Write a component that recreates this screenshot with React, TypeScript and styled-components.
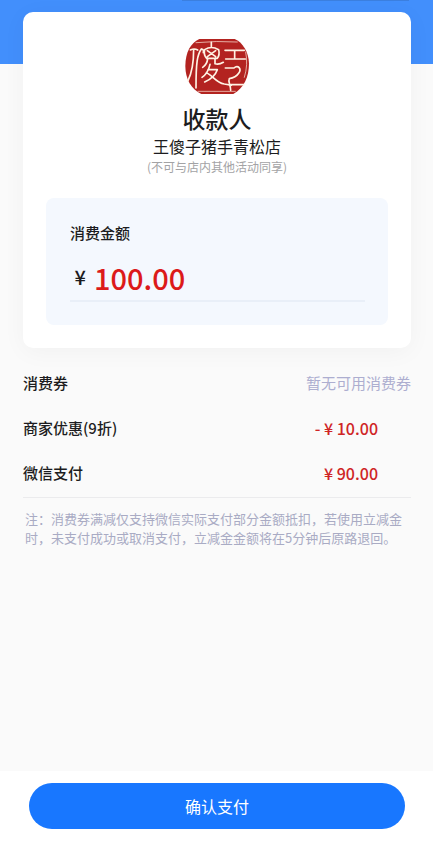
import React from "react";
import styled, { createGlobalStyle } from "styled-components";

const GlobalStyle = createGlobalStyle`
  * { box-sizing: border-box; }
  body {
    margin: 0;
    font-family: "Noto Sans CJK SC", "Noto Sans", sans-serif;
    color: #1c1c20;
    background: #fafafa;
  }
`;

const Page = styled.div`
  display: flex;
  flex-direction: column;
  min-height: 100vh;
  background: linear-gradient(#428ffc 64px, #fafafa 64px);
`;

const TopLine = styled.div`
  height: 1px;
  margin: 0 24px 0 42%;
  background: #3b7fdf;
`;

const Main = styled.main`
  flex: 1;
  padding: 11px 22px 24px 23px;
`;

const Card = styled.section`
  display: flex;
  flex-direction: column;
  align-items: center;
  padding: 26px 23px 23px;
  border-radius: 10px;
  background: #ffffff;
  box-shadow: 0 4px 24px rgba(0, 0, 0, 0.04);
`;

const Title = styled.h1`
  margin: 6px 0 0;
  font-size: 23px;
  line-height: 32px;
  font-weight: 500;
`;

const Shop = styled.p`
  margin: 0;
  font-size: 16px;
  line-height: 24px;
`;

const Hint = styled.p`
  margin: 0;
  font-size: 12px;
  line-height: 18px;
  color: #a3a3a5;
`;

const AmountBox = styled.div`
  align-self: stretch;
  margin-top: 22px;
  padding: 23px 23px 23px 24px;
  border-radius: 8px;
  background: #f4f8fe;
`;

const AmountLabel = styled.label`
  display: block;
  font-size: 15px;
  line-height: 24px;
  font-weight: 500;
`;

const AmountField = styled.div`
  display: flex;
  align-items: center;
  gap: 8px;
  margin-top: 11px;
  padding-bottom: 2px;
  border-bottom: 2px solid #e9eff8;
`;

const Currency = styled.span`
  width: 16px;
  font-size: 20px;
  line-height: 32px;
  font-weight: 500;
  text-align: right;
`;

const AmountInput = styled.input`
  flex: 1;
  min-width: 0;
  height: 42px;
  padding: 0;
  border: 0;
  outline: 0;
  background: transparent;
  font-family: inherit;
  font-size: 29px;
  font-weight: 500;
  color: #dc1a1a;
`;

const Details = styled.dl`
  margin: 12px 0 0;
  padding-bottom: 2px;
  border-bottom: 1px solid #ebebed;
`;

const Row = styled.div`
  display: flex;
  align-items: center;
  justify-content: space-between;
  height: 45px;
`;

const Name = styled.dt`
  font-size: 15px;
  font-weight: 500;
`;

const Value = styled.dd<{ $tone: "muted" | "price" }>`
  margin: 0;
  padding-right: ${(p) => (p.$tone === "price" ? "33px" : "0")};
  font-size: ${(p) => (p.$tone === "price" ? "16px" : "15px")};
  font-weight: ${(p) => (p.$tone === "price" ? 500 : 400)};
  color: ${(p) => (p.$tone === "price" ? "#cf2525" : "#adaed0")};
`;

const Note = styled.p`
  margin: 11px 0 0 2px;
  font-size: 13px;
  line-height: 19px;
  color: #a9abc4;
`;

const Footer = styled.footer`
  padding: 12px 28px 16px 29px;
  background: #ffffff;
`;

const PayButton = styled.button`
  display: block;
  width: 100%;
  height: 46px;
  border: 0;
  border-radius: 23px;
  background: #1877ff;
  color: #ffffff;
  font-family: inherit;
  font-size: 16px;
  cursor: pointer;
`;

const rows: { name: string; value: string; tone: "muted" | "price" }[] = [
  { name: "消费券", value: "暂无可用消费券", tone: "muted" },
  { name: "商家优惠(9折)", value: "- ¥ 10.00", tone: "price" },
  { name: "微信支付", value: "¥ 90.00", tone: "price" },
];

function SealLogo() {
  return (
    <svg width="65" height="58" viewBox="27 24 195 174" role="img" aria-label="王傻子">
      <path
        d="M70 27 H176 C200 37 218 66 219 100 C219 142 204 174 172 192 H76 C46 178 28 148 28 108 C28 68 44 38 70 27Z"
        fill="#b32320"
      />
      <g fill="none" stroke="#fff3e4" strokeLinecap="round" strokeLinejoin="round">
        <path d="M60 38 Q120 32 184 36 M66 184 H178 M209 66 Q217 104 205 142" strokeWidth="2" />
        <path d="M53 58 C53 96 48 128 36 152 M43 60 Q55 54 65 60 M76 57 C64 74 60 96 60 174 M76 57 Q84 57 82 68" strokeWidth="5" />
        <path d="M106 37 V52 M86 59 Q106 46 128 59 Q132 75 124 85 H92 Q82 74 86 59Z M94 62 L119 80 M119 62 L94 80 M95 86 C94 98 89 106 80 112 M117 86 V101 Q128 105 142 97" strokeWidth="5" />
        <path d="M102 103 C98 121 90 134 78 142 M96 119 H124 C118 136 104 148 86 156 M91 128 C108 134 119 157 145 162 Q160 164 166 166" strokeWidth="5" />
        <path d="M147 61 H205 M149 87 H208 M176 62 V86 M148 114 H174 C186 103 198 117 188 130 C182 139 174 144 160 146 M160 146 C155 154 164 164 164 181 M160 164 H203" strokeWidth="5" />
      </g>
    </svg>
  );
}

export default function App() {
  return (
    <>
      <GlobalStyle />
      <Page>
        <TopLine />
        <Main>
          <Card>
            <SealLogo />
            <Title>收款人</Title>
            <Shop>王傻子猪手青松店</Shop>
            <Hint>(不可与店内其他活动同享)</Hint>
            <AmountBox>
              <AmountLabel htmlFor="amount">消费金额</AmountLabel>
              <AmountField>
                <Currency>¥</Currency>
                <AmountInput id="amount" inputMode="decimal" defaultValue="100.00" />
              </AmountField>
            </AmountBox>
          </Card>
          <Details>
            {rows.map((row) => (
              <Row key={row.name}>
                <Name>{row.name}</Name>
                <Value $tone={row.tone}>{row.value}</Value>
              </Row>
            ))}
          </Details>
          <Note>
            注：消费券满减仅支持微信实际支付部分金额抵扣，若使用立减金时，未支付成功或取消支付，立减金金额将在5分钟后原路退回。
          </Note>
        </Main>
        <Footer>
          <PayButton type="button">确认支付</PayButton>
        </Footer>
      </Page>
    </>
  );
}
